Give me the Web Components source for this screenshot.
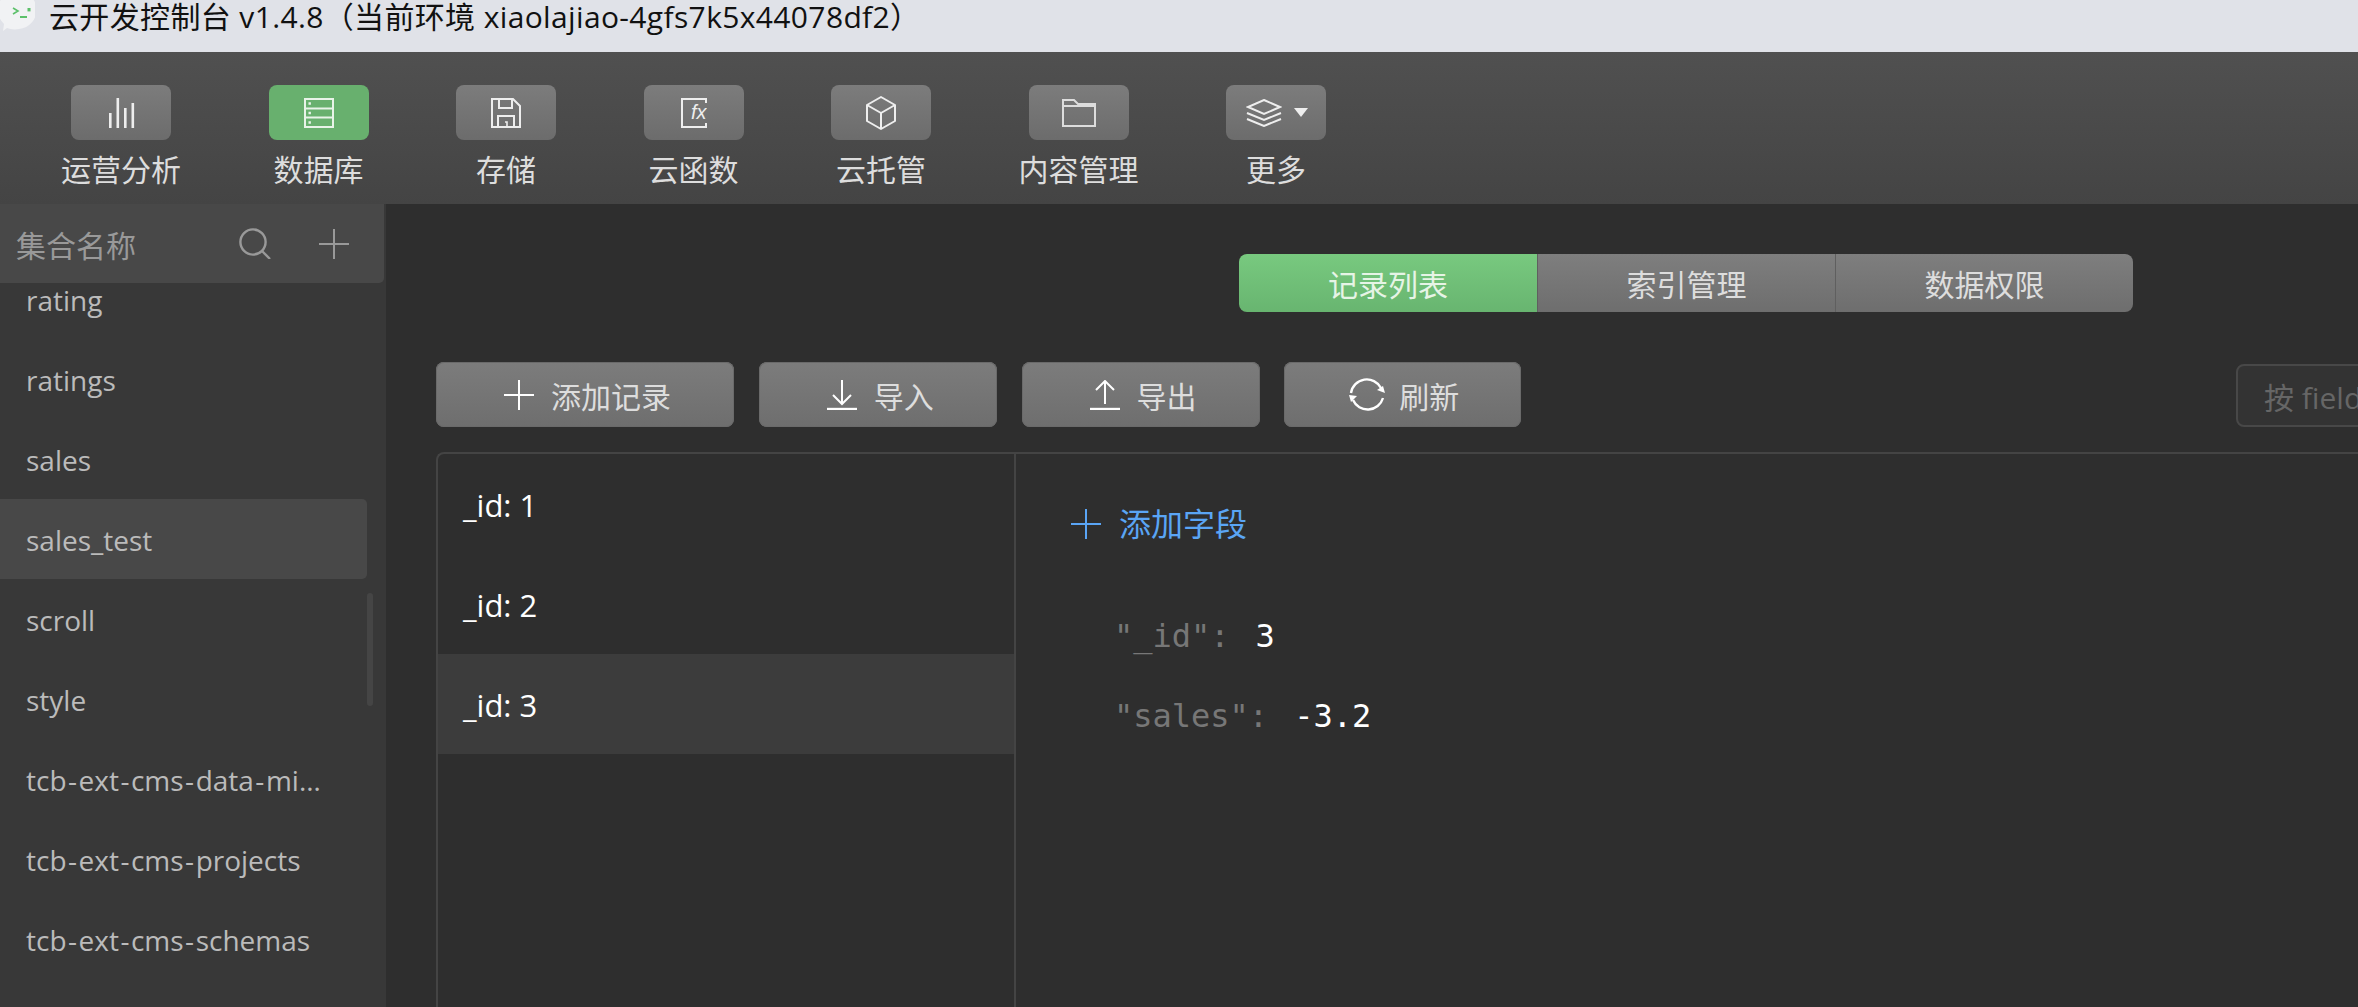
<!DOCTYPE html>
<html lang="zh">
<head>
<meta charset="utf-8">
<title>云开发控制台</title>
<style>
  html, body { margin: 0; height: 100%; overflow: hidden; background: #2e2e2e; }
  body {
    display: flex;
    flex-direction: column;
    width: 2358px;
    height: 1007px;
    font-family: "Open Sans", "Noto Sans CJK SC", sans-serif;
  }
  svg { display: block; }
</style>
</head>
<body>
<title-bar>云开发控制台 v1.4.8（当前环境 xiaolajiao-4gfs7k5x44078df2）</title-bar>

<tool-bar>
  <tool-item label="运营分析">
    <svg width="30" height="30" viewBox="0 0 30 30" fill="#eee"><rect x="3" y="15" width="2.6" height="15"/><rect x="10.5" y="0" width="2.6" height="30"/><rect x="18" y="10" width="2.6" height="20"/><rect x="25.5" y="5" width="2.6" height="25"/></svg>
  </tool-item>
  <tool-item label="数据库" active>
    <svg width="30" height="30" viewBox="0 0 30 30" fill="none" stroke="#e8f3e8" stroke-width="2"><rect x="1" y="1" width="28" height="28"/><path d="M1 10.5h28M1 19.5h28"/><path d="M4.5 5.5h2.4M4.5 15h2.4M4.5 24.5h2.4" stroke-width="2.4"/></svg>
  </tool-item>
  <tool-item label="存储">
    <svg width="30" height="30" viewBox="0 0 30 30" fill="none" stroke="#eee" stroke-width="2"><path d="M1 1h21l7 7v21H1z"/><path d="M8 1v9h13V1"/><path d="M7 29v-11h16v11"/><path d="M14 24h2v5" stroke-width="1.6"/></svg>
  </tool-item>
  <tool-item label="云函数">
    <svg width="26" height="30" viewBox="0 0 26 30" fill="none" stroke="#eee" stroke-width="2"><path d="M25 5V1H1v28h24v-4"/><text x="10" y="21" font-family="Liberation Sans, sans-serif" font-style="italic" font-size="20" fill="#eee" stroke="none">fx</text></svg>
  </tool-item>
  <tool-item label="云托管">
    <svg width="30" height="34" viewBox="0 0 30 34" fill="none" stroke="#eee" stroke-width="2" stroke-linejoin="round"><path d="M15 1l14 8v16l-14 8-14-8V9z"/><path d="M1 9l14 8 14-8M15 17v16"/></svg>
  </tool-item>
  <tool-item label="内容管理">
    <svg width="34" height="28" viewBox="0 0 34 28" fill="none" stroke="#ddd" stroke-width="2"><path d="M1 27V1h11l4 4h17v22z"/><path d="M1 7h32"/></svg>
  </tool-item>
  <tool-item label="更多">
    <div style="display:flex;align-items:center;gap:12px;margin-left:2px">
      <svg width="36" height="28" viewBox="0 0 36 28" fill="none" stroke="#eee" stroke-width="2"><path d="M18 1l16 7-16 7L2 8z"/><path d="M1 14l17 7 17-7M1 20l17 7 17-7"/></svg>
      <svg width="14" height="9" viewBox="0 0 14 9" fill="#eee"><path d="M0 0h14L7 9z"/></svg>
    </div>
  </tool-item>
</tool-bar>

<work-area>
  <side-bar slot="side">
    <side-item name="rating"></side-item>
    <side-item name="ratings"></side-item>
    <side-item name="sales"></side-item>
    <side-item name="sales_test" selected></side-item>
    <side-item name="scroll"></side-item>
    <side-item name="style"></side-item>
    <side-item name="tcb-ext-cms-data-migrate"></side-item>
    <side-item name="tcb-ext-cms-projects"></side-item>
    <side-item name="tcb-ext-cms-schemas"></side-item>
  </side-bar>

  <seg-tabs>
    <seg-tab active>记录列表</seg-tab>
    <seg-tab>索引管理</seg-tab>
    <seg-tab>数据权限</seg-tab>
  </seg-tabs>

  <action-row>
    <action-button>
      <svg slot="icon" width="30" height="30" viewBox="0 0 30 30" stroke="#fff" stroke-width="2"><path d="M0 15h30M15 0v30"/></svg>
      添加记录
    </action-button>
    <action-button>
      <svg slot="icon" width="30" height="30" viewBox="0 0 30 30" fill="none" stroke="#fff" stroke-width="2"><path d="M15 0v24M6 15l9 9 9-9"/><path d="M0 29h30" stroke-width="2.4"/></svg>
      导入
    </action-button>
    <action-button>
      <svg slot="icon" width="30" height="30" viewBox="0 0 30 30" fill="none" stroke="#fff" stroke-width="2"><path d="M15 24V1M6 10l9-9 9 9"/><path d="M0 29h30" stroke-width="2.4"/></svg>
      导出
    </action-button>
    <action-button tight>
      <svg slot="icon" width="36" height="36" viewBox="0 0 36 36" fill="none" stroke="#fff" stroke-width="2.4"><path d="M2 16A16 16 0 0 1 32 11"/><path d="M34 21A16 16 0 0 1 4 23"/><path d="M28 13l8 3-2-7z" fill="#fff" stroke="none"/><path d="M0 18l8 1-6 6z" fill="#fff" stroke="none"/></svg>
      刷新
    </action-button>
    <search-box>按 field</search-box>
  </action-row>

  <record-panel>
    <record-row slot="rows">_id: 1</record-row>
    <record-row slot="rows">_id: 2</record-row>
    <record-row slot="rows" selected>_id: 3</record-row>
    <add-field>添加字段</add-field>
    <json-row name="_id" value="3"></json-row>
    <json-row name="sales" value="-3.2"></json-row>
  </record-panel>
</work-area>

<script>
class TitleBar extends HTMLElement {
  constructor() {
    super();
    this.attachShadow({ mode: 'open' });
    this.shadowRoot.innerHTML = `
      <style>
        :host {
          display: flex;
          flex: none;
          height: 52px;
          gap: 14px;
          background: #e0e2e8;
          color: #111;
          font-size: 30px;
          line-height: 33px;
          letter-spacing: 0.36px;
          white-space: nowrap;
          overflow: hidden;
        }
        svg { flex: none; display: block; }
      </style>
      <svg width="35" height="34" viewBox="0 0 35 34">
        <path d="M16 -9a19 19 0 0 1 3 38c-5 1-9 0-12-1l-4 3 1-7a19 19 0 0 1 12-33z" fill="#f1f2f4"/>
        <path d="M13 8l5 3-5 3" fill="none" stroke="#5cc06a" stroke-width="1.6"/>
        <path d="M20 17h7" stroke="#5cc06a" stroke-width="2"/>
        <rect x="27.5" y="8" width="3" height="3.4" fill="#5cc06a"/>
      </svg>
      <span><slot></slot></span>
    `;
  }
}

class ToolBar extends HTMLElement {
  constructor() {
    super();
    this.attachShadow({ mode: 'open' });
    this.shadowRoot.innerHTML = `
      <style>
        :host {
          display: flex;
          flex: none;
          height: 152px;
          box-sizing: border-box;
          padding: 33px 0 0 61px;
          gap: 87.5px;
          background: linear-gradient(#505050, #444);
        }
      </style>
      <slot></slot>
    `;
  }
}

class ToolItem extends HTMLElement {
  constructor() {
    super();
    this.attachShadow({ mode: 'open' });
  }

  connectedCallback() {
    const label = this.getAttribute('label');
    this.shadowRoot.innerHTML = `
      <style>
        :host {
          display: flex;
          flex-direction: column;
          align-items: center;
          gap: 15px;
          min-width: 100px;
        }
        .box {
          display: flex;
          align-items: center;
          justify-content: center;
          width: 100px;
          height: 55px;
          border-radius: 8px;
          background: linear-gradient(#7c7c7c, #6c6c6c);
        }
        :host([active]) .box { background: #68b06e; }
        .label {
          color: #ddd;
          font-size: 30px;
          line-height: 30px;
          white-space: nowrap;
        }
      </style>
      <div class="box"><slot></slot></div>
      <div class="label">${label}</div>
    `;
  }
}

class WorkArea extends HTMLElement {
  constructor() {
    super();
    this.attachShadow({ mode: 'open' });
    this.shadowRoot.innerHTML = `
      <style>
        :host {
          display: flex;
          flex: 1;
          min-height: 0;
          overflow: hidden;
        }
        .main {
          display: flex;
          flex-direction: column;
          flex: none;
          width: 2600px;
          box-sizing: border-box;
          padding: 50px 50px 0;
          background: #2e2e2e;
        }
      </style>
      <slot name="side"></slot>
      <div class="main"><slot></slot></div>
    `;
  }
}

class SideBar extends HTMLElement {
  constructor() {
    super();
    this.attachShadow({ mode: 'open' });
    this.shadowRoot.innerHTML = `
      <style>
        :host {
          display: flex;
          flex-direction: column;
          flex: none;
          width: 386px;
          background: #383838;
        }
        .head {
          display: flex;
          align-items: center;
          flex: none;
          height: 79px;
          margin-right: 2px;
          padding-left: 16px;
          box-sizing: border-box;
          background: #484848;
          border-radius: 0 0 5px 0;
          color: #999;
          font-size: 30px;
        }
        .head span { flex: 1; }
        .head svg { display: block; }
        .search { margin-right: 48px; }
        .plus { margin-right: 35px; }
        .list {
          position: relative;
          flex: 1;
          overflow: hidden;
        }
        .items { margin-top: -24px; }
        .thumb {
          position: absolute;
          left: 367px;
          top: 310px;
          width: 6px;
          height: 113px;
          border-radius: 3px;
          background: #454545;
        }
      </style>
      <div class="head">
        <span>集合名称</span>
        <svg class="search" width="32" height="31" viewBox="0 0 32 31" fill="none" stroke="#999" stroke-width="2.4"><circle cx="14" cy="14" r="12.6"/><path d="M23 23l8 8"/></svg>
        <svg class="plus" width="30" height="30" viewBox="0 0 30 30" stroke="#999" stroke-width="2"><path d="M0 15h30M15 0v30"/></svg>
      </div>
      <div class="list">
        <div class="items"><slot></slot></div>
        <div class="thumb"></div>
      </div>
    `;
  }
}

class SideItem extends HTMLElement {
  constructor() {
    super();
    this.attachShadow({ mode: 'open' });
  }

  connectedCallback() {
    // hyphens get a little air, the collection names run wider than the font gives
    const name = this.getAttribute('name').replace(/-/g, '<span class="dash">-</span>');
    this.shadowRoot.innerHTML = `
      <style>
        :host {
          display: block;
          height: 80px;
          width: 367px;
          box-sizing: border-box;
          padding: 0 40px 0 26px;
          border-radius: 0 5px 5px 0;
          color: #bbb;
          font-size: 28px;
          line-height: 82px;
          white-space: nowrap;
          overflow: hidden;
          text-overflow: ellipsis;
        }
        :host([selected]) { background: #484848; }
        .dash { padding: 0 1.5px; }
      </style>${name}`;
  }
}

class SegTabs extends HTMLElement {
  constructor() {
    super();
    this.attachShadow({ mode: 'open' });
    this.shadowRoot.innerHTML = `
      <style>
        :host {
          display: flex;
          flex: none;
          align-self: center;
          height: 58px;
          border-radius: 8px;
          overflow: hidden;
          margin-bottom: 50px;
        }
      </style>
      <slot></slot>
    `;
  }
}

class SegTab extends HTMLElement {
  constructor() {
    super();
    this.attachShadow({ mode: 'open' });
    this.shadowRoot.innerHTML = `
      <style>
        :host {
          display: flex;
          align-items: center;
          justify-content: center;
          box-sizing: border-box;
          width: 298px;
          color: #ddd;
          font-size: 30px;
          background: linear-gradient(#7e7e7e, #6e6e6e);
          border-left: 1px solid #5f5f5f;
        }
        :host([active]) {
          background: linear-gradient(#78c97f, #68b570);
          border-left: 0;
          color: #e6f4e6;
        }
      </style>
      <slot></slot>
    `;
  }
}

class ActionRow extends HTMLElement {
  constructor() {
    super();
    this.attachShadow({ mode: 'open' });
    this.shadowRoot.innerHTML = `
      <style>
        :host {
          display: flex;
          flex: none;
          gap: 24.75px;
          height: 65px;
          margin-bottom: 25px;
        }
      </style>
      <slot></slot>
    `;
  }
}

class ActionButton extends HTMLElement {
  constructor() {
    super();
    this.attachShadow({ mode: 'open' });
    this.shadowRoot.innerHTML = `
      <style>
        :host {
          display: inline-flex;
          align-items: center;
          gap: 17px;
          box-sizing: border-box;
          height: 65px;
          padding: 0 63px 0 68px;
          border-radius: 8px;
          color: #ddd;
          font-size: 30px;
          background: linear-gradient(#7c7c7c, #6e6e6e);
          box-shadow: inset 0 0 0 1px #6a6a6a;
        }
        :host([tight]) { gap: 14px; padding: 0 62px 0 65px; }
      </style>
      <slot name="icon"></slot>
      <slot></slot>
    `;
  }
}

class SearchBox extends HTMLElement {
  constructor() {
    super();
    this.attachShadow({ mode: 'open' });
    this.shadowRoot.innerHTML = `
      <style>
        :host {
          display: flex;
          align-items: center;
          box-sizing: border-box;
          width: 700px;
          height: 63px;
          margin: 2px 0 0 auto;
          padding-left: 26px;
          border: 2px solid #484848;
          border-radius: 8px;
          background: #333;
          color: #666;
          font-size: 30px;
        }
      </style>
      <slot></slot>
    `;
  }
}

class RecordPanel extends HTMLElement {
  constructor() {
    super();
    this.attachShadow({ mode: 'open' });
    this.shadowRoot.innerHTML = `
      <style>
        :host {
          display: flex;
          flex: 1;
          min-height: 0;
          border: solid #444;
          border-width: 2px 0 0 2px;
          border-radius: 8px 0 0 0;
        }
        .rows {
          flex: none;
          width: 576px;
          border-right: 2px solid #444;
        }
        .detail {
          flex: 1;
          padding: 55px 0 0 55px;
        }
      </style>
      <div class="rows"><slot name="rows"></slot></div>
      <div class="detail"><slot></slot></div>
    `;
  }
}

class RecordRow extends HTMLElement {
  constructor() {
    super();
    this.attachShadow({ mode: 'open' });
    this.shadowRoot.innerHTML = `
      <style>
        :host {
          display: block;
          height: 100px;
          padding-left: 25px;
          color: #fff;
          font-size: 31px;
          line-height: 102px;
        }
        :host([selected]) { background: #3c3c3c; }
      </style>
      <slot></slot>
    `;
  }
}

class AddField extends HTMLElement {
  constructor() {
    super();
    this.attachShadow({ mode: 'open' });
    this.shadowRoot.innerHTML = `
      <style>
        :host {
          display: flex;
          align-items: center;
          gap: 18px;
          height: 30px;
          margin-bottom: 57px;
          color: #5aa5f5;
          font-size: 32px;
          line-height: 30px;
        }
        svg { display: block; flex: none; }
      </style>
      <svg width="30" height="30" viewBox="0 0 30 30" stroke="#5aa5f5" stroke-width="2"><path d="M0 15h30M15 0v30"/></svg>
      <slot></slot>
    `;
  }
}

class JsonRow extends HTMLElement {
  constructor() {
    super();
    this.attachShadow({ mode: 'open' });
  }

  connectedCallback() {
    const name = this.getAttribute('name');
    const value = this.getAttribute('value');
    this.shadowRoot.innerHTML = `
      <style>
        :host {
          display: block;
          padding-left: 43px;
          font-family: "DejaVu Sans Mono", monospace;
          font-size: 32px;
          line-height: 80px;
          white-space: nowrap;
        }
        .key { color: #777; }
        .value { color: #fff; margin-left: 26px; }
      </style>
      <span class="key">"${name}":</span><span class="value">${value}</span>
    `;
  }
}

customElements.define('title-bar', TitleBar);
customElements.define('tool-bar', ToolBar);
customElements.define('tool-item', ToolItem);
customElements.define('work-area', WorkArea);
customElements.define('side-bar', SideBar);
customElements.define('side-item', SideItem);
customElements.define('seg-tabs', SegTabs);
customElements.define('seg-tab', SegTab);
customElements.define('action-row', ActionRow);
customElements.define('action-button', ActionButton);
customElements.define('search-box', SearchBox);
customElements.define('record-panel', RecordPanel);
customElements.define('record-row', RecordRow);
customElements.define('add-field', AddField);
customElements.define('json-row', JsonRow);
</script>
</body>
</html>
